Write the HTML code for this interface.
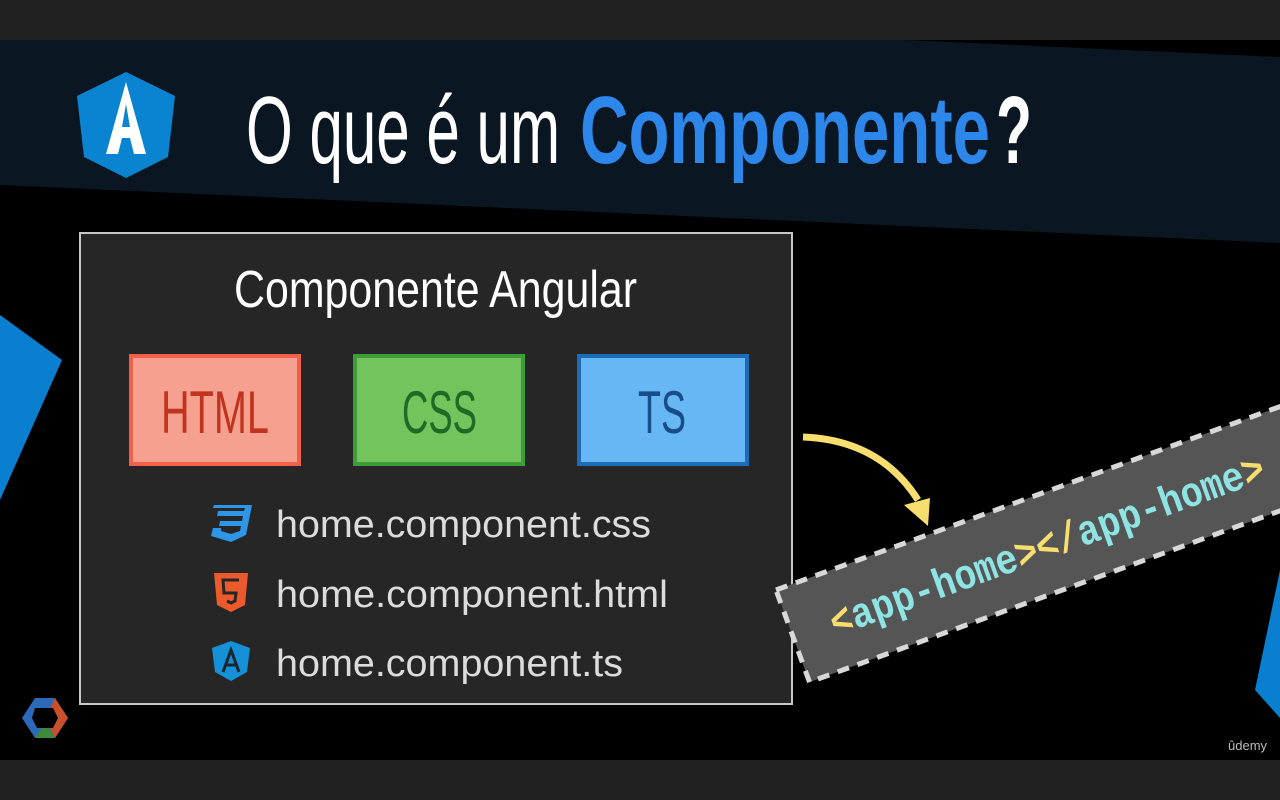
<!DOCTYPE html>
<html><head><meta charset="utf-8"><style>html,body{margin:0;padding:0;background:#000;width:1280px;height:800px;overflow:hidden}</style></head><body>
<svg width="1280" height="800" viewBox="0 0 1280 800" xmlns="http://www.w3.org/2000/svg">
<rect width="1280" height="800" fill="#000"/>
<rect width="1280" height="40" fill="#212121"/>
<rect y="760" width="1280" height="40" fill="#212121"/>
<polygon points="0,40 906,40 1280,57 1280,243 0,185" fill="#0a1722"/>
<polygon points="126,72 175,96 168,157 126,178 84,157 77,96" fill="#0a84d0"/>
<polygon points="126,82 106,154 118,154 122,138 130,138 134,154 146,154" fill="#fff"/>
<polygon points="126,104 122,127 130,127" fill="#0a84d0"/>
<g font-family="'Liberation Sans',sans-serif">
<text x="246" y="163" font-size="96" fill="#fff" font-weight="300" textLength="314" lengthAdjust="spacingAndGlyphs">O que é um</text>
<text x="580" y="163" font-size="96" fill="#2d87ea" font-weight="bold" textLength="410" lengthAdjust="spacingAndGlyphs">Componente</text>
<text x="996" y="163" font-size="96" fill="#fff" font-weight="bold" textLength="36" lengthAdjust="spacingAndGlyphs">?</text>
</g>
<polygon points="0,315 62,360 0,500" fill="#0a7fd0"/>
<polygon points="1280,570 1255,690 1280,718" fill="#0a7fd0"/>
<rect x="80" y="233" width="712" height="471" fill="#262626" stroke="#c8c8c8" stroke-width="2"/>
<g font-family="'Liberation Sans',sans-serif">
<text x="234" y="307" font-size="52" fill="#fff" textLength="403" lengthAdjust="spacingAndGlyphs">Componente Angular</text>
<rect x="131" y="356" width="168" height="108" fill="#f6a08f" stroke="#f0604a" stroke-width="4"/>
<text x="161" y="433" font-size="60" fill="#c0331f" textLength="108" lengthAdjust="spacingAndGlyphs">HTML</text>
<rect x="355" y="356" width="168" height="108" fill="#74c45e" stroke="#3e9c39" stroke-width="4"/>
<text x="402" y="433" font-size="60" fill="#1f6a24" textLength="75" lengthAdjust="spacingAndGlyphs">CSS</text>
<rect x="579" y="356" width="168" height="108" fill="#66b7f4" stroke="#1d6cb8" stroke-width="4"/>
<text x="638" y="433" font-size="60" fill="#174e8a" textLength="48" lengthAdjust="spacingAndGlyphs">TS</text>
<text x="276" y="537" font-size="38" fill="#dcdcdc" textLength="375" lengthAdjust="spacingAndGlyphs">home.component.css</text>
<text x="276" y="607" font-size="38" fill="#dcdcdc" textLength="392" lengthAdjust="spacingAndGlyphs">home.component.html</text>
<text x="276" y="676" font-size="38" fill="#dcdcdc" textLength="347" lengthAdjust="spacingAndGlyphs">home.component.ts</text>
</g>
<polygon points="214,505 252,505 246,535 231,542 211,536 213,528 221,528 221,531 231,534 240,531 241,526 219,526 220,521 242,521 243,516 217,516 218,511 244,511 245,508 213,508" fill="#2d96e8"/>
<polygon points="214,573 248,573 245,605 231,612 217,605" fill="#ea5a2c"/>
<path d="M239,580 H223 L224,593 H236 L235,601 L231,603 L227,601" stroke="#262626" stroke-width="3" fill="none"/>
<polygon points="231,641 250,648 247,672 231,681 215,672 212,648" fill="#1591d8"/>
<path d="M223,672 L231,650 L239,672 M226,665 H236" stroke="#19262e" stroke-width="3" fill="none"/>
<path d="M803,437 Q880,440 918,500" stroke="#f7de6e" stroke-width="7" fill="none"/>
<polygon points="904,505 930,498 928,526" fill="#f7de6e"/>
<g transform="translate(776,590) rotate(-20)">
<rect x="0" y="0" width="560" height="98" fill="#555" stroke="#d8d8d8" stroke-width="5" stroke-dasharray="12,9"/>
<text x="40" y="64" font-family="'Liberation Mono',monospace" font-weight="bold" font-size="42" textLength="460" lengthAdjust="spacingAndGlyphs"><tspan fill="#f7de6e">&lt;</tspan><tspan fill="#8ee3e3">app-home</tspan><tspan fill="#f7de6e">&gt;&lt;/</tspan><tspan fill="#8ee3e3">app-home</tspan><tspan fill="#f7de6e">&gt;</tspan></text>
</g>
<polygon points="35,698 55,698 68,718 55,738 35,738 22,718" fill="#2a6ab8"/>
<polygon points="55,698 68,718 55,738 45,718" fill="#c8502c"/>
<polygon points="35,738 55,738 45,722" fill="#3c8a3a"/>
<polygon points="35,708 53,708 58,718 53,728 37,728 32,718" fill="#000"/>
<text x="1228" y="750" font-family="'Liberation Sans',sans-serif" font-size="13" fill="#bbb">ûdemy</text>
</svg>
</body></html>
